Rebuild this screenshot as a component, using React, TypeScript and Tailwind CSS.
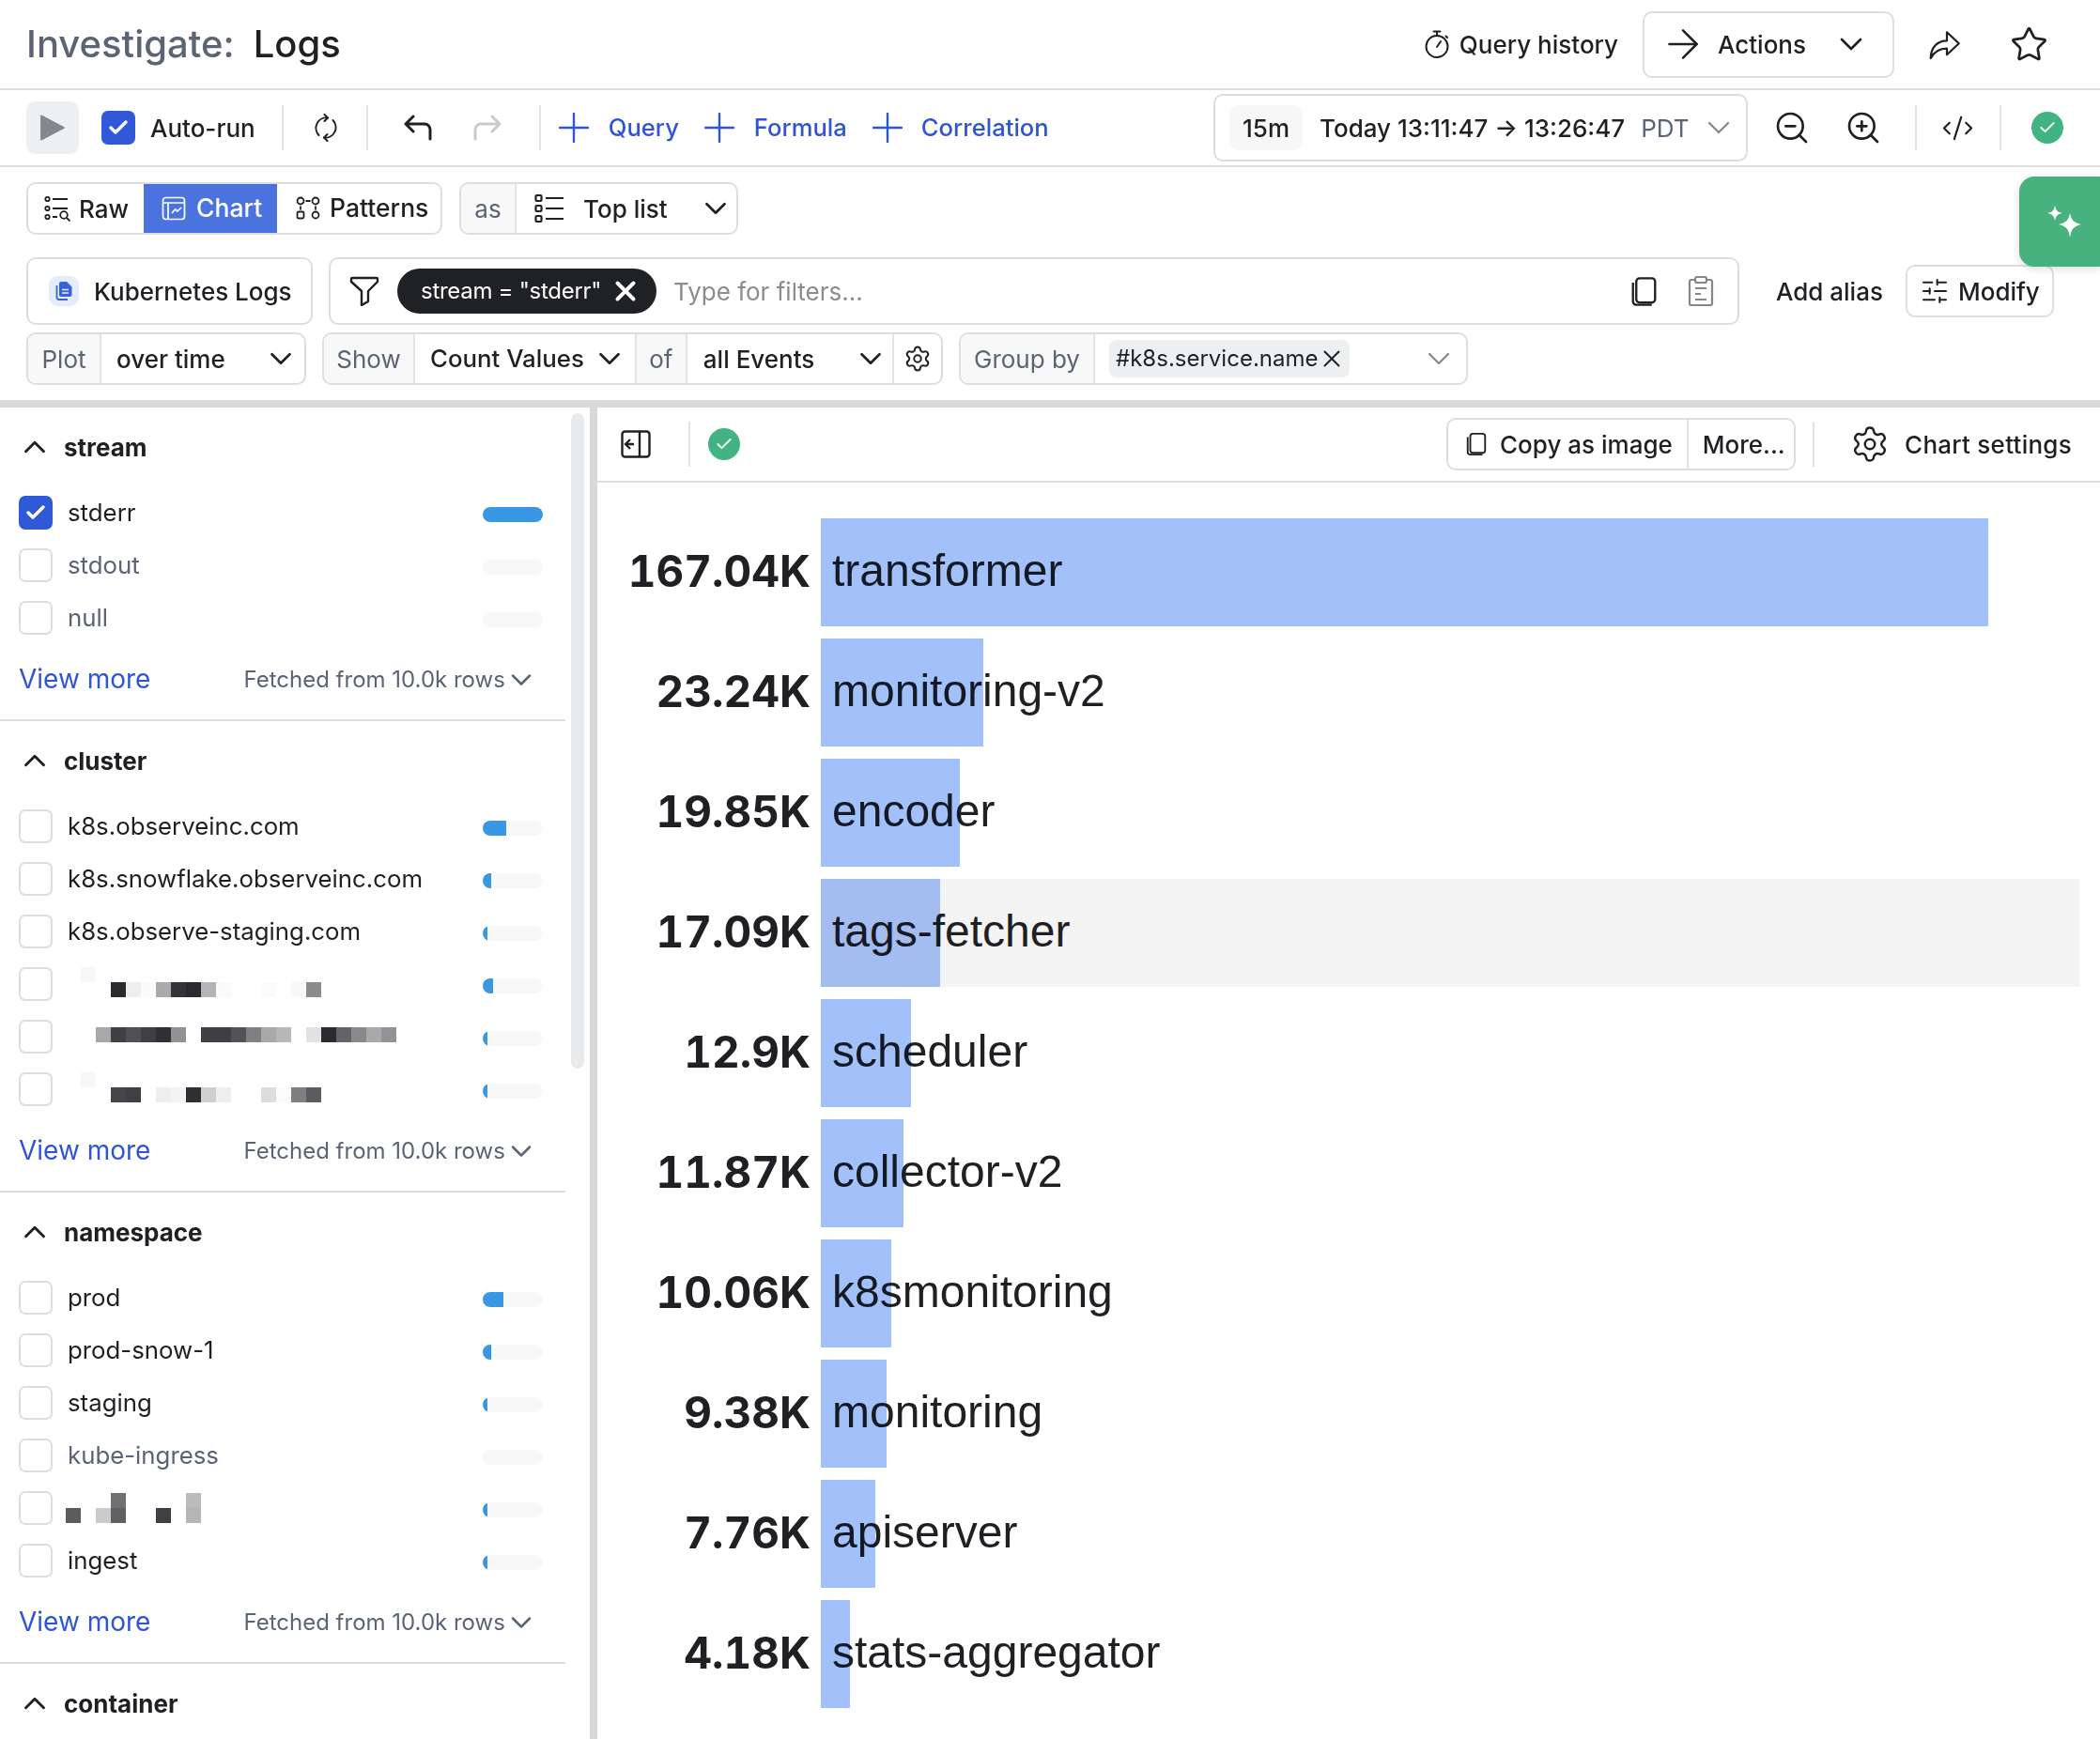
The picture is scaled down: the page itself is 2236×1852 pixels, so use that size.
import type { ReactNode } from "react";
import {
  ArrowRight,
  Check,
  ChevronDown,
  ChevronUp,
  CodeXml,
  Settings,
  SlidersHorizontal,
  Star,
  X,
  ZoomIn,
  ZoomOut,
} from "lucide-react";

type Block = [number, number, string];

function Sep({ className = "" }: { className?: string }) {
  return <div className={`h-[48px] w-[2px] shrink-0 bg-[#e3e3e3] ${className}`} />;
}

function PlusIcon({ className = "" }: { className?: string }) {
  return (
    <svg width="32" height="32" viewBox="0 0 32 32" fill="none" stroke="currentColor" strokeWidth="2.4" strokeLinecap="round" className={`shrink-0 text-[#2f55d4] ${className}`}>
      <path d="M16 1v30M1 16h30" />
    </svg>
  );
}

function UndoIcon({ className = "" }: { className?: string }) {
  return (
    <svg width="30" height="28" viewBox="0 0 30 28" fill="none" stroke="currentColor" strokeWidth="3" strokeLinecap="round" strokeLinejoin="round" className={`shrink-0 ${className}`}>
      <path d="M10 2 2 10l8 8M2 10h20a6 6 0 0 1 6 6v10" />
    </svg>
  );
}

function CopyIcon({ size = 28, className = "" }: { size?: number; className?: string }) {
  return (
    <svg width={size} height={size} viewBox="0 0 24 28" fill="none" stroke="currentColor" strokeWidth="2" className={className}>
      <rect x="5" y="2" width="17" height="22" rx="3" />
      <path d="M2 6v17a3 3 0 0 0 3 3h14" />
    </svg>
  );
}

function CheckDot({ className = "" }: { className?: string }) {
  return (
    <div className={`flex h-[34px] w-[34px] shrink-0 items-center justify-center rounded-full bg-[#42b382] text-white ${className}`}>
      <Check size={20} strokeWidth={2.2} />
    </div>
  );
}

function Addon({ children, className = "" }: { children: ReactNode; className?: string }) {
  return (
    <div className={`flex h-full shrink-0 items-center justify-center border-r-2 border-[#e3e3e3] bg-[#f8f8f8] text-[#5b6475] ${className}`}>
      {children}
    </div>
  );
}

function CheckBox({ checked }: { checked?: boolean }) {
  if (checked) {
    return (
      <div className="flex h-[36px] w-[36px] shrink-0 items-center justify-center rounded-[7px] bg-[#3059d8] text-white">
        <Check size={24} strokeWidth={3.5} />
      </div>
    );
  }
  return <div className="h-[36px] w-[36px] shrink-0 rounded-[7px] border-2 border-[#dedede] bg-white" />;
}

function Mosaic({ blocks }: { blocks: Block[] }) {
  return (
    <svg width="360" height="56" className="ml-[14px]">
      {blocks.map(([x, y, fill]) => (
        <rect key={`${x}-${y}`} x={x} y={y} width="16" height="16" fill={fill} />
      ))}
    </svg>
  );
}

type Item = { label?: string; muted?: boolean; checked?: boolean; fill: number; blocks?: Block[] };

function FacetRow({ item }: { item: Item }) {
  return (
    <div className="flex h-[56px] items-center pl-[20px]">
      <CheckBox checked={item.checked} />
      {item.blocks ? (
        <Mosaic blocks={item.blocks} />
      ) : (
        <span className={`ml-[16px] mt-[1px] text-[25.8px] ${item.muted ? "text-[#5b6475]" : "text-[#1f2024]"}`}>{item.label}</span>
      )}
      <div className="ml-auto mr-[24px] mt-[4px] h-[16px] w-[64px] overflow-hidden rounded-full bg-[#f8f8f8]">
        <div className="h-full bg-[#3a97e4]" style={{ width: item.fill }} />
      </div>
    </div>
  );
}

function Facet({ title, items }: { title: string; items: Item[] }) {
  return (
    <section className="border-b-2 border-[#dedede]">
      <div className="flex h-[84px] items-center pl-[18px]">
        <ChevronUp size={38} strokeWidth={1.8} className="text-[#1f2024]" />
        <span className="ml-[12px] text-[26px] font-bold text-[#1f2024]">{title}</span>
      </div>
      {items.map((item, i) => (
        <FacetRow key={i} item={item} />
      ))}
      {items.length > 0 && (
        <div className="h-[80px] pl-[20px] pt-[18px]">
          <div className="flex h-[38px] items-center">
            <span className="text-[28px] text-[#2f55d4]">View more</span>
            <span className="ml-[99px] mt-[2px] text-[24px] text-[#5b6475]">Fetched from 10.0k rows</span>
            <ChevronDown size={36} strokeWidth={1.7} className="mt-[2px] ml-[-1px] text-[#5b6475]" />
          </div>
        </div>
      )}
    </section>
  );
}

const streamItems: Item[] = [
  { label: "stderr", checked: true, fill: 64 },
  { label: "stdout", muted: true, fill: 0 },
  { label: "null", muted: true, fill: 0 },
];

const clusterItems: Item[] = [
  { label: "k8s.observeinc.com", fill: 25 },
  { label: "k8s.snowflake.observeinc.com", fill: 9 },
  { label: "k8s.observe-staging.com", fill: 5 },
  {
    fill: 11,
    blocks: [
      [16, 10, "#f8f8f8"], [48, 26, "#2a2b30"], [64, 26, "#eeeeee"], [80, 26, "#fafafa"], [96, 26, "#aaaaac"],
      [112, 26, "#333438"], [128, 26, "#2a2b30"], [144, 26, "#b5b5b7"], [160, 26, "#fafafa"], [208, 26, "#fbfbfb"],
      [240, 26, "#f9f9f9"], [256, 26, "#8b8c90"],
    ],
  },
  {
    fill: 5,
    blocks: [
      [32, 18, "#a8a8a8"], [48, 18, "#3e3f44"], [64, 18, "#505155"], [80, 18, "#3f4045"], [96, 18, "#303136"],
      [112, 18, "#929294"], [144, 18, "#3e3f44"], [160, 18, "#3e3f44"], [176, 18, "#525357"], [192, 18, "#7f8083"],
      [208, 18, "#a9a9ab"], [224, 18, "#b8b8ba"], [256, 18, "#e2e2e2"], [272, 18, "#2a2b30"], [288, 18, "#636468"],
      [304, 18, "#88898c"], [320, 18, "#a8a9ab"], [336, 18, "#929396"],
    ],
  },
  {
    fill: 5,
    blocks: [
      [16, 10, "#f8f8f8"], [48, 26, "#45464b"], [64, 26, "#3f4045"], [96, 26, "#eeeeee"], [112, 26, "#f4f4f4"],
      [128, 26, "#2e2f34"], [144, 26, "#cfcfcf"], [160, 26, "#eeeeee"], [208, 26, "#dddddd"], [224, 26, "#fbfbfb"],
      [240, 26, "#7e7f83"], [256, 26, "#5c5d61"],
    ],
  },
];

const namespaceItems: Item[] = [
  { label: "prod", fill: 22 },
  { label: "prod-snow-1", fill: 9 },
  { label: "staging", fill: 5 },
  { label: "kube-ingress", muted: true, fill: 0 },
  {
    fill: 5,
    blocks: [
      [48, 12, "#707175"], [128, 12, "#bbbbbd"], [0, 28, "#5b5c60"], [32, 28, "#cbcbcd"], [48, 28, "#5f6064"],
      [96, 28, "#3f4045"], [128, 28, "#b5b5b7"],
    ],
  },
  { label: "ingest", fill: 5 },
];

const bars = [
  { value: "167.04K", name: "transformer", w: 1243 },
  { value: "23.24K", name: "monitoring-v2", w: 173 },
  { value: "19.85K", name: "encoder", w: 148 },
  { value: "17.09K", name: "tags-fetcher", w: 127, hover: true },
  { value: "12.9K", name: "scheduler", w: 96 },
  { value: "11.87K", name: "collector-v2", w: 88 },
  { value: "10.06K", name: "k8smonitoring", w: 75 },
  { value: "9.38K", name: "monitoring", w: 70 },
  { value: "7.76K", name: "apiserver", w: 58 },
  { value: "4.18K", name: "stats-aggregator", w: 31 },
];

export default function App() {
  return (
    <div className="relative flex h-[1852px] w-[2236px] flex-col overflow-hidden bg-white font-['Inter',sans-serif] text-[#1f2024]">
      {/* Header */}
      <header className="flex h-[96px] shrink-0 items-center border-b-2 border-[#e0e0e0] pl-[28px] pr-[55px]">
        <h1 className="text-[40px] font-medium text-[#5b6475]">Investigate:</h1>
        <span className="ml-[20px] text-[40px] font-medium">Logs</span>
        <svg width="26" height="30" viewBox="0 0 26 30" fill="none" stroke="currentColor" strokeWidth="2" strokeLinecap="round" className="ml-auto">
          <circle cx="13" cy="17.500" r="11.500" />
          <path d="M9.500 1.500h7M13 1.500V6M22.500 6.500l1.500 1.500M13 18l4-6" />
        </svg>
        <span className="ml-[11px] text-[26px] font-medium">Query history</span>
        <div className="ml-[26px] flex h-[71px] w-[268px] items-center rounded-[10px] border-2 border-[#dedede] pl-[16px]">
          <ArrowRight size={50} strokeWidth={1.2} />
          <span className="ml-[12px] text-[26px] font-medium">Actions</span>
          <ChevronDown size={40} strokeWidth={1.6} className="ml-[28px]" />
        </div>
        <svg width="36" height="36" viewBox="0 0 24 24" fill="none" stroke="currentColor" strokeWidth="1.500" strokeLinejoin="round" className="ml-[35px]">
          <path d="M14 3.500 22.500 11.500 14 19.500V15c-5.500 0-9 2-11.500 7 0-7.500 4.500-12.500 11.500-12.500Z" />
        </svg>
        <Star size={41} strokeWidth={1.6} className="ml-[52px]" />
      </header>

      {/* Query toolbar */}
      <div className="flex h-[82px] shrink-0 items-center border-b-2 border-[#e0e0e0] pl-[28px] pr-[39px]">
        <div className="flex h-[56px] w-[56px] items-center justify-center rounded-[9px] bg-[#eeeff1]">
          <svg width="28" height="28" viewBox="0 0 26 26" className="text-[#85878c]">
            <path d="M1 1.500a1 1 0 0 1 1.500-.8l22 11.500a1 1 0 0 1 0 1.600l-22 11.500A1 1 0 0 1 1 24.500Z" fill="currentColor" />
          </svg>
        </div>
        <div className="ml-[24px]">
          <CheckBox checked />
        </div>
        <span className="ml-[16px] text-[26px] font-medium">Auto-run</span>
        <Sep className="ml-[28px]" />
        <svg width="26" height="30" viewBox="0 0 26 30" fill="none" stroke="currentColor" strokeWidth="2" strokeLinecap="round" strokeLinejoin="round" className="ml-[32px]">
          <path d="M15 4.500A11 11 0 0 0 5.500 23M11 25.500A11 11 0 0 0 20.500 7" />
          <path d="M11.500 1 15 4.500 11.500 8M14.500 22 11 25.500l3.500 3.500" />
        </svg>
        <Sep className="ml-[30px]" />
        <UndoIcon className="ml-[38px]" />
        <UndoIcon className="ml-[44px] -scale-x-100 text-[#c9cacc]" />
        <Sep className="ml-[40px]" />
        <PlusIcon className="ml-[19px]" />
        <span className="ml-[21px] text-[25.6px] font-medium text-[#2f55d4]">Query</span>
        <PlusIcon className="ml-[27px]" />
        <span className="ml-[21px] text-[25.6px] font-medium text-[#2f55d4]">Formula</span>
        <PlusIcon className="ml-[27px]" />
        <span className="ml-[20px] text-[25.6px] font-medium text-[#2f55d4]">Correlation</span>
        <div className="ml-auto flex h-[72px] w-[569px] shrink-0 items-center rounded-[10px] border-2 border-[#dedede] pl-[15px]">
          <div className="flex h-[48px] w-[78px] items-center justify-center rounded-[9px] bg-[#f7f7f7] text-[26px] font-medium">15m</div>
          <span className="ml-[18px] text-[26px] font-medium whitespace-nowrap">Today 13:11:47 → 13:26:47</span>
          <span className="ml-[17px] text-[26px] text-[#5b6475]">PDT</span>
          <ChevronDown size={40} strokeWidth={1.3} className="ml-[11px] text-[#85878c]" />
        </div>
        <ZoomOut size={40} strokeWidth={1.6} className="ml-[27px]" />
        <ZoomIn size={40} strokeWidth={1.6} className="ml-[36px]" />
        <Sep className="ml-[35px]" />
        <CodeXml size={35} strokeWidth={1.5} className="ml-[26px]" />
        <Sep className="ml-[27px]" />
        <CheckDot className="ml-[32px]" />
      </div>

      {/* View mode row */}
      <div className="flex shrink-0 items-center pl-[28px] pt-[16px]">
        <div className="flex h-[56px] w-[443px] overflow-hidden rounded-[10px] border-2 border-[#dedede]">
          <div className="flex w-[123px] items-center pl-[17px]">
            <svg width="28" height="28" viewBox="0 0 28 28" fill="none" stroke="currentColor" strokeWidth="1.800">
              <circle cx="3.500" cy="4" r="2.200" />
              <circle cx="3.500" cy="14" r="2.200" />
              <circle cx="3.500" cy="23" r="2.200" />
              <path d="M9 4h16M9 14h16M9 23h5" />
              <circle cx="21" cy="21" r="3.800" />
              <path d="m24 24 3.500 3.500" />
            </svg>
            <span className="ml-[9px] text-[26px] font-medium">Raw</span>
          </div>
          <div className="flex w-[142px] items-center bg-[#4a73de] pl-[19px] text-white">
            <svg width="26" height="26" viewBox="0 0 26 26" fill="none" stroke="currentColor" strokeWidth="1.700" strokeLinejoin="round">
              <rect x="1.500" y="1.500" width="23" height="23" rx="3" />
              <path d="M1.500 7h23M7 7v17.500M11 18l3.500-4 2.500 2 4-4" />
            </svg>
            <span className="ml-[11px] text-[26.5px] font-medium">Chart</span>
          </div>
          <div className="flex flex-1 items-center pl-[20px]">
            <svg width="26" height="26" viewBox="0 0 26 26" fill="none" stroke="currentColor" strokeWidth="1.800">
              <circle cx="5" cy="5" r="3.500" />
              <circle cx="21" cy="5" r="3.500" />
              <rect x="1.500" y="16.500" width="7" height="7" rx="1.500" />
              <circle cx="21" cy="20" r="3.500" />
              <path d="M10.500 5h5M5 10.500v4M21 10.500v4" />
            </svg>
            <span className="ml-[10px] text-[26.5px] font-medium">Patterns</span>
          </div>
        </div>
        <div className="ml-[18px] flex h-[56px] w-[297px] items-center overflow-hidden rounded-[10px] border-2 border-[#dedede]">
          <Addon className="w-[59px] text-[26px]">as</Addon>
          <svg width="32" height="32" viewBox="0 0 32 32" fill="none" stroke="currentColor" strokeWidth="2.200" className="ml-[19px]">
            <rect x="1.500" y="2" width="6" height="6" rx="1" />
            <rect x="1.500" y="13" width="6" height="6" rx="1" />
            <rect x="1.500" y="24" width="6" height="6" rx="1" />
            <path d="M12 5h19M12 16h19M12 27h19" />
          </svg>
          <span className="ml-[20px] text-[26px] font-medium">Top list</span>
          <ChevronDown size={38} strokeWidth={1.7} className="ml-auto mr-[3px]" />
        </div>
      </div>

      {/* Source and filter row */}
      <div className="flex shrink-0 items-center pl-[28px] pt-[24px]">
        <div className="flex h-[72px] w-[305px] items-center rounded-[10px] border-2 border-[#dedede] pl-[22px]">
          <div className="flex h-[32px] w-[32px] items-center justify-center rounded-[9px] bg-[#e4edfd]">
            <svg width="18" height="20" viewBox="0 0 18 20" className="text-[#3a62dc]">
              <path d="M1.500 4v12.500A2.500 2.500 0 0 0 4 19h9" fill="none" stroke="currentColor" strokeWidth="1.800" />
              <path d="M6 0h6l5.500 5.500V14a2 2 0 0 1-2 2H6a2 2 0 0 1-2-2V2a2 2 0 0 1 2-2Z" fill="currentColor" />
              <path d="M7 8.500h7M7 12h7" stroke="#e4edfd" strokeWidth="1.500" />
            </svg>
          </div>
          <span className="ml-[16px] text-[26px] font-medium">Kubernetes Logs</span>
        </div>
        <div className="ml-[17px] flex h-[72px] w-[1502px] items-center rounded-[10px] border-2 border-[#dedede] pl-[20px]">
          <svg width="32" height="32" viewBox="0 0 32 32" fill="none" stroke="currentColor" strokeWidth="2.400" strokeLinejoin="round">
            <path d="M3 2h26a1 1 0 0 1 1 1v3L20 16v11l-7 4V16L2 6V3a1 1 0 0 1 1-1Z" />
          </svg>
          <div className="ml-[19px] flex h-[48px] w-[276px] items-center rounded-full bg-[#1f2125] pl-[25px] text-white">
            <span className="text-[24px] tracking-[-0.012em] whitespace-nowrap">stream = "stderr"</span>
            <X size={34} strokeWidth={2.8} className="ml-[9px]" />
          </div>
          <span className="ml-[18px] text-[26px] text-[#8a8c90]">Type for filters...</span>
          <CopyIcon size={33} className="ml-auto" />
          <svg width="30" height="34" viewBox="0 0 30 34" fill="none" stroke="currentColor" strokeWidth="2.200" className="ml-[29px] mr-[24px] text-[#85878c]">
            <path d="M9 5H5a2 2 0 0 0-2 2v23a2 2 0 0 0 2 2h20a2 2 0 0 0 2-2V7a2 2 0 0 0-2-2h-4" />
            <rect x="9" y="2" width="12" height="6" rx="2" />
            <path d="M9 14h12M9 20h6M9 26h12" />
          </svg>
        </div>
        <span className="ml-[39px] text-[26px] font-medium whitespace-nowrap">Add alias</span>
        <div className="ml-[24px] flex h-[56px] w-[158px] shrink-0 items-center rounded-[10px] border-2 border-[#dedede] pl-[13px]">
          <SlidersHorizontal size={32} strokeWidth={1.5} />
          <span className="ml-[9px] text-[26px] font-medium">Modify</span>
        </div>
      </div>

      {/* Plot row */}
      <div className="flex shrink-0 items-center pl-[28px] pt-[8px]">
        <div className="flex h-[56px] w-[298px] items-center overflow-hidden rounded-[10px] border-2 border-[#dedede]">
          <Addon className="w-[78px] text-[26px]">Plot</Addon>
          <span className="ml-[16px] text-[26px] font-medium">over time</span>
          <ChevronDown size={38} strokeWidth={1.7} className="ml-auto mr-[6px]" />
        </div>
        <div className="ml-[17px] flex h-[56px] w-[661px] items-center overflow-hidden rounded-[10px] border-2 border-[#dedede]">
          <Addon className="w-[97px] text-[26px]">Show</Addon>
          <span className="ml-[16px] text-[25.8px] font-medium whitespace-nowrap">Count Values</span>
          <ChevronDown size={38} strokeWidth={1.7} className="ml-[8px]" />
          <div className="ml-[8px] h-full w-[2px] bg-[#e3e3e3]" />
          <Addon className="w-[54px] text-[26px]">of</Addon>
          <span className="ml-[17px] text-[26px] font-medium whitespace-nowrap">all Events</span>
          <ChevronDown size={38} strokeWidth={1.7} className="ml-auto" />
          <div className="ml-[4px] h-full w-[2px] bg-[#e3e3e3]" />
          <Settings size={30} strokeWidth={1.6} className="mx-[10px]" />
        </div>
        <div className="ml-[17px] flex h-[56px] w-[542px] items-center overflow-hidden rounded-[10px] border-2 border-[#dedede]">
          <Addon className="w-[143px] text-[26px] whitespace-nowrap">Group by</Addon>
          <div className="ml-[15px] flex h-[40px] w-[256px] shrink-0 items-center rounded-[8px] bg-[#eeeff1] pl-[7px]">
            <span className="text-[24px] whitespace-nowrap">#k8s.service.name</span>
            <X size={30} strokeWidth={1.6} />
          </div>
          <ChevronDown size={40} strokeWidth={1.3} className="ml-auto mr-[9px] text-[#85878c]" />
        </div>
      </div>

      {/* AI button */}
      <div className="absolute left-[2150px] top-[188px] flex h-[96px] w-[86px] items-center rounded-l-[16px] bg-[#47b27d] pl-[29px] text-white shadow-[0_2px_8px_rgba(0,0,0,0.15)]">
        <svg width="38" height="36" viewBox="0 0 38 36" fill="currentColor">
          <path d="M9 1c1.200 5.500 2.500 6.800 8 8-5.500 1.200-6.800 2.500-8 8-1.200-5.500-2.500-6.800-8-8 5.500-1.200 6.800-2.500 8-8Z" />
          <path d="M25 9c1.500 7.500 3.800 9.700 12 12-8.200 2.300-10.500 4.500-12 14-1.500-9.500-3.800-11.700-12-14 8.200-2.300 10.500-4.500 12-12Z" />
        </svg>
      </div>

      {/* Body */}
      <div className="mt-[16px] flex min-h-0 flex-1 border-t-[8px] border-[#d9d9d9]">
        <aside className="flex w-[636px] shrink-0 border-r-[8px] border-[#d9d9d9]">
          <div className="w-[602px] shrink-0">
            <Facet title="stream" items={streamItems} />
            <Facet title="cluster" items={clusterItems} />
            <Facet title="namespace" items={namespaceItems} />
            <Facet title="container" items={[]} />
          </div>
          <div className="ml-[6px] mt-[6px] h-[698px] w-[14px] rounded-full bg-[#e9eaec]" />
        </aside>

        <main className="min-w-0 flex-1">
          <div className="flex h-[80px] items-center border-b-2 border-[#e0e0e0] pl-[25px]">
            <svg width="32" height="30" viewBox="0 0 32 30" fill="none" stroke="currentColor" strokeWidth="2.400">
              <rect x="1.500" y="1.500" width="29" height="27" rx="3" />
              <path d="M20 1.500v27M14 15H6M10 10l-5 5 5 5" />
            </svg>
            <Sep className="ml-[40px]" />
            <CheckDot className="ml-[19px]" />
            <div className="ml-auto flex h-[56px] w-[372px] items-center rounded-[10px] border-2 border-[#dedede]">
              <CopyIcon size={26} className="ml-[17px]" />
              <span className="ml-[12px] text-[26px] font-medium whitespace-nowrap">Copy as image</span>
              <div className="ml-[15px] h-full w-[2px] bg-[#e3e3e3]" />
              <span className="ml-[15px] text-[26px] font-medium">More...</span>
            </div>
            <Sep className="ml-[18px]" />
            <Settings size={42} strokeWidth={1.4} className="ml-[38px]" />
            <span className="ml-[16px] mr-[30px] text-[26px] font-medium tracking-[0.01em] whitespace-nowrap">Chart settings</span>
          </div>

          <div className="flex flex-col gap-[13px] pt-[38px]">
            {bars.map((b) => (
              <div key={b.name} className="flex h-[115px] items-center">
                <span className="w-[227px] pb-[3px] text-right text-[46px] font-bold tabular-nums">{b.value}</span>
                <div className={`relative ml-[11px] mr-[22px] flex h-full flex-1 items-center pb-[3px] pl-[12px] ${b.hover ? "bg-[#f4f4f4]" : ""}`}>
                  <span className="font-['Liberation_Sans',sans-serif] text-[48px] whitespace-nowrap">{b.name}</span>
                  <div className={`absolute inset-y-0 left-0 mix-blend-multiply ${b.hover ? "bg-[#aac6fb]" : "bg-[#a2c1fb]"}`} style={{ width: b.w }} />
                </div>
              </div>
            ))}
          </div>
        </main>
      </div>
    </div>
  );
}
